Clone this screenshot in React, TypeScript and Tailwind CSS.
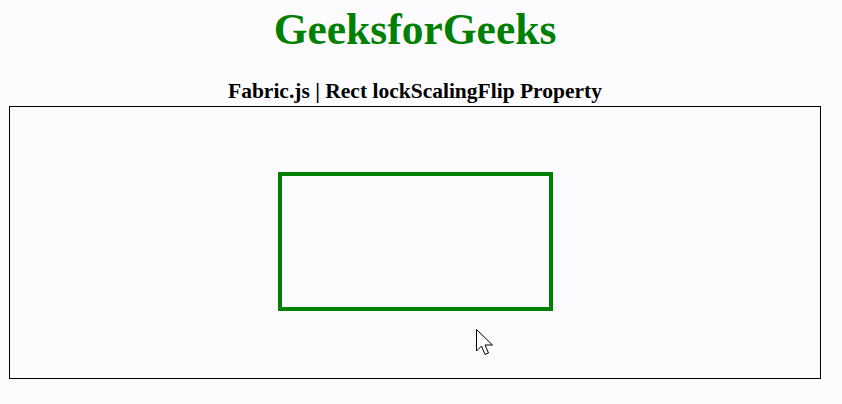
import React from "react";

export default function App() {
  return (
    <div className="w-[842px] h-[404px] bg-[#fcfcff] overflow-hidden" style={{ fontFamily: '"Liberation Serif", "Times New Roman", serif' }}>
      <div className="ml-[9px] w-[812px] flex flex-col items-center">
        <h1 className="mt-[4px] h-[50px] text-[43.5px] leading-[50px] font-bold text-[#008000] text-center">GeeksforGeeks</h1>
        <h2 className="mt-[25px] h-[25px] text-[21.5px] leading-[25px] font-bold text-black text-center">Fabric.js | Rect lockScalingFlip Property</h2>
        <div className="mt-[2px] relative w-[812px] h-[273px] border border-black bg-[#fcfcff]">
          <div className="absolute left-[268px] top-[65px] w-[275px] h-[139px] border-[4px] border-[#008000]" />
          <svg className="absolute left-[466px] top-[222px]" width="20" height="28" viewBox="0 0 20 28">
            <path d="M0.5 0.5 L0.5 22 L5.5 17 L9 25.5 L12.5 24 L9 16 L16.5 16 Z" fill="#ffffff" stroke="#000000" strokeWidth="1" strokeLinejoin="miter" />
          </svg>
        </div>
      </div>
    </div>
  );
}
